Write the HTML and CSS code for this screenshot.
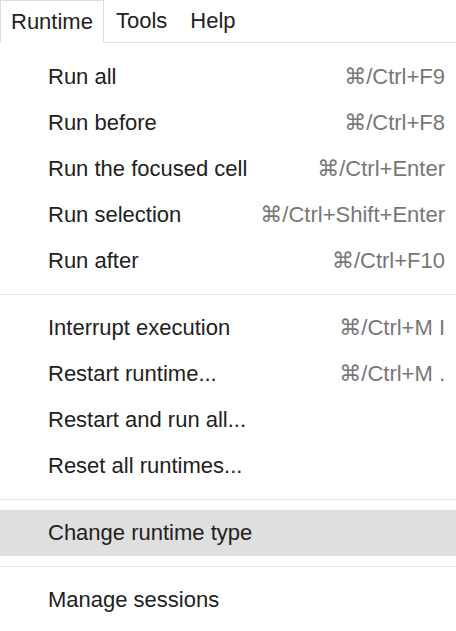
FILE: index.html
```html
<!DOCTYPE html>
<html>
<head>
<meta charset="utf-8">
<link rel="stylesheet" href="styles.css">
</head>
<body>
<div class="menubar">
  <div class="tab active">Runtime</div>
  <div class="tab">Tools</div>
  <div class="tab">Help</div>
  <div class="fill"></div>
</div>
<div class="menu">
  <div class="item"><span class="label">Run all</span><span class="key">⌘/Ctrl+F9</span></div>
  <div class="item"><span class="label">Run before</span><span class="key">⌘/Ctrl+F8</span></div>
  <div class="item"><span class="label">Run the focused cell</span><span class="key">⌘/Ctrl+Enter</span></div>
  <div class="item"><span class="label">Run selection</span><span class="key">⌘/Ctrl+Shift+Enter</span></div>
  <div class="item"><span class="label">Run after</span><span class="key">⌘/Ctrl+F10</span></div>
  <div class="sep"></div>
  <div class="item"><span class="label">Interrupt execution</span><span class="key">⌘/Ctrl+M I</span></div>
  <div class="item"><span class="label">Restart runtime...</span><span class="key">⌘/Ctrl+M .</span></div>
  <div class="item"><span class="label">Restart and run all...</span></div>
  <div class="item"><span class="label">Reset all runtimes...</span></div>
  <div class="sep"></div>
  <div class="item hover"><span class="label">Change runtime type</span></div>
  <div class="sep"></div>
  <div class="item"><span class="label">Manage sessions</span></div>
</div>
</body>
</html>
```
FILE: styles.css
```css
html, body {
  margin: 0;
  padding: 0;
  background: #ffffff;
}
body {
  font-family: "Liberation Sans", Arial, "DejaVu Sans", sans-serif;
  font-size: 22px;
  color: #212121;
  width: 456px;
  height: 631px;
  overflow: hidden;
}
.menubar {
  display: flex;
  height: 43px;
}
.tab {
  line-height: 42px;
  height: 42px;
  padding: 0 11px 0 12px;
  border-bottom: 1px solid #dcdcdc;
  color: #222;
}
.tab.active {
  padding: 0 10px;
  border: 1px solid #dcdcdc;
  border-bottom: 1px solid transparent;
  line-height: 41px;
  height: 41px;
  background: #fff;
}
.fill {
  flex: 1;
  border-bottom: 1px solid #dcdcdc;
}
.menu {
  padding-top: 11px;
}
.item {
  display: flex;
  justify-content: space-between;
  align-items: center;
  height: 46px;
  line-height: 46px;
  padding: 0 11px 0 48px;
}
.item.hover {
  background: #dfdfdf;
}
.label {
  color: #212121;
}
.key {
  color: #777777;
}
.sep {
  height: 1px;
  background: #e4e4e4;
  margin: 10px 0;
}
```
